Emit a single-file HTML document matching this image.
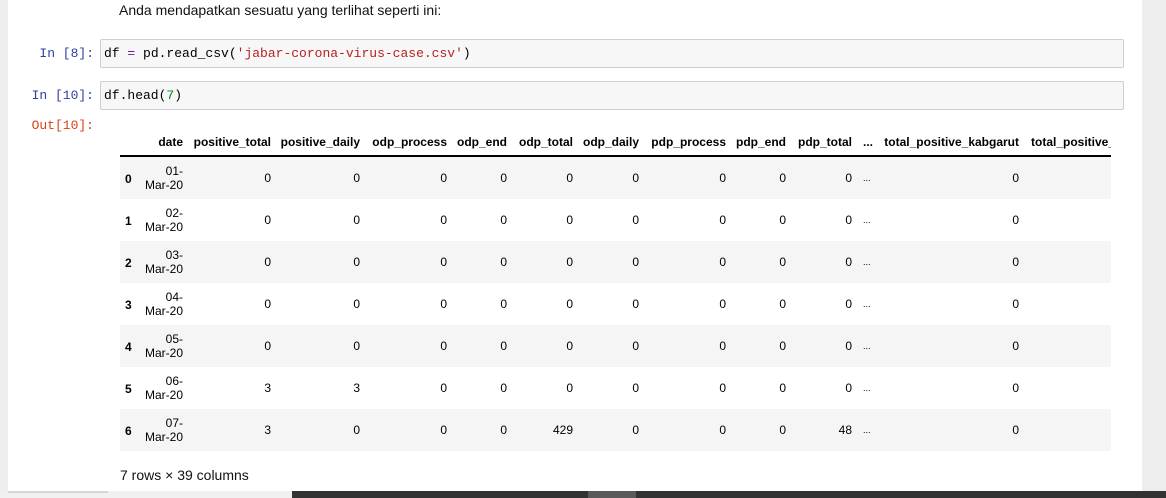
<!DOCTYPE html>
<html><head><meta charset="utf-8"><style>
*{margin:0;padding:0;box-sizing:border-box}
body{width:1166px;height:498px;overflow:hidden;background:#fff;position:relative;font-family:"Liberation Sans",Arial,sans-serif;font-size:12px;color:#000}
.a{position:absolute;white-space:nowrap}
.r{position:absolute;white-space:nowrap;text-align:right}
.code{font-family:"Liberation Mono",monospace;font-size:13px}
.cell{position:absolute;left:100px;width:1024px;height:29px;background:#f7f7f7;border:1px solid #cfcfcf;border-radius:2px}
.h{font-weight:bold}
.band{position:absolute;left:120px;width:991px;height:42px;background:#f5f5f5}
</style></head><body>
<div class="a" style="left:0;top:0;width:8px;height:498px;background:#eeeeee"></div>
<div class="a" style="left:1142px;top:0;width:24px;height:498px;background:#eeeeee"></div>
<div class="a" style="left:119px;top:2px;font-size:14px;color:#111">Anda mendapatkan sesuatu yang terlihat seperti ini:</div>

<div class="r code" style="right:1072px;top:46px;color:#303f9f">In [8]:</div>
<div class="cell" style="top:39px"></div>
<div class="a code" style="left:104px;top:46px">df <span style="color:#7216ab">=</span> pd.read_csv(<span style="color:#ba2121">'jabar-corona-virus-case.csv'</span>)</div>

<div class="r code" style="right:1072px;top:88px;color:#303f9f">In [10]:</div>
<div class="cell" style="top:81px"></div>
<div class="a code" style="left:104px;top:88px">df.head(<span style="color:#080">7</span>)</div>

<div class="r code" style="right:1072px;top:118px;color:#d84315">Out[10]:</div>

<div class="a" style="left:120px;top:155px;width:991px;height:2px;background:#000"></div>
<div class="band" style="top:157px"></div>
<div class="band" style="top:241px"></div>
<div class="band" style="top:325px"></div>
<div class="band" style="top:409px"></div>

<div id="t"></div>
<div class="a" style="left:120px;top:467px;font-size:14px;color:#111">7 rows × 39 columns</div>

<div class="a" style="left:0;top:491px;width:292px;height:7px;background:#f0f0f0"></div>
<div class="a" style="left:8px;top:491px;width:100px;height:2px;background:#d6d6d6"></div>
<div class="a" style="left:292px;top:491px;width:874px;height:7px;background:#333"></div>
<div class="a" style="left:588px;top:491px;width:48px;height:7px;background:#5a5a5a"></div>
<script>
var edges=[183,271,360,447,507,573,639,726,786,852,873,1019];
var heads=["date","positive_total","positive_daily","odp_process","odp_end","odp_total","odp_daily","pdp_process","pdp_end","pdp_total","...","total_positive_kabgarut"];
var rows=[["0","0","0","0","0","0","0","0","0","0"],["0","0","0","0","0","0","0","0","0","0"],["0","0","0","0","0","0","0","0","0","0"],["0","0","0","0","0","0","0","0","0","0"],["0","0","0","0","0","0","0","0","0","0"],["3","3","0","0","0","0","0","0","0","0"],["3","0","0","0","429","0","0","0","48","0"]];
var h="";
for(var i=0;i<heads.length;i++){
 var e=edges[i];
 h+='<div class="r h" style="right:'+(1166-e)+'px;top:135px">'+heads[i]+'</div>';
}
h+='<div class="a h" style="left:1031px;top:135px;width:80px;overflow:hidden">total_positive_</div>';
for(var r=0;r<7;r++){
 var y=157+42*r;
 h+='<div class="a h" style="left:125px;top:'+(y+15)+'px">'+r+'</div>';
 h+='<div class="r" style="right:'+(1166-183)+'px;top:'+(y+7)+'px;line-height:14px">0'+(r+1)+'-<br>Mar-20</div>';
 var v=rows[r];
 for(var c=0;c<9;c++){
  h+='<div class="r" style="right:'+(1166-edges[c+1])+'px;top:'+(y+14)+'px">'+v[c]+'</div>';
 }
 h+='<div class="a" style="left:863px;top:'+(y+16)+'px;font-size:9px">...</div>';
 h+='<div class="r" style="right:'+(1166-1019)+'px;top:'+(y+14)+'px">'+v[9]+'</div>';
}
document.getElementById("t").innerHTML=h;
</script>
</body></html>
